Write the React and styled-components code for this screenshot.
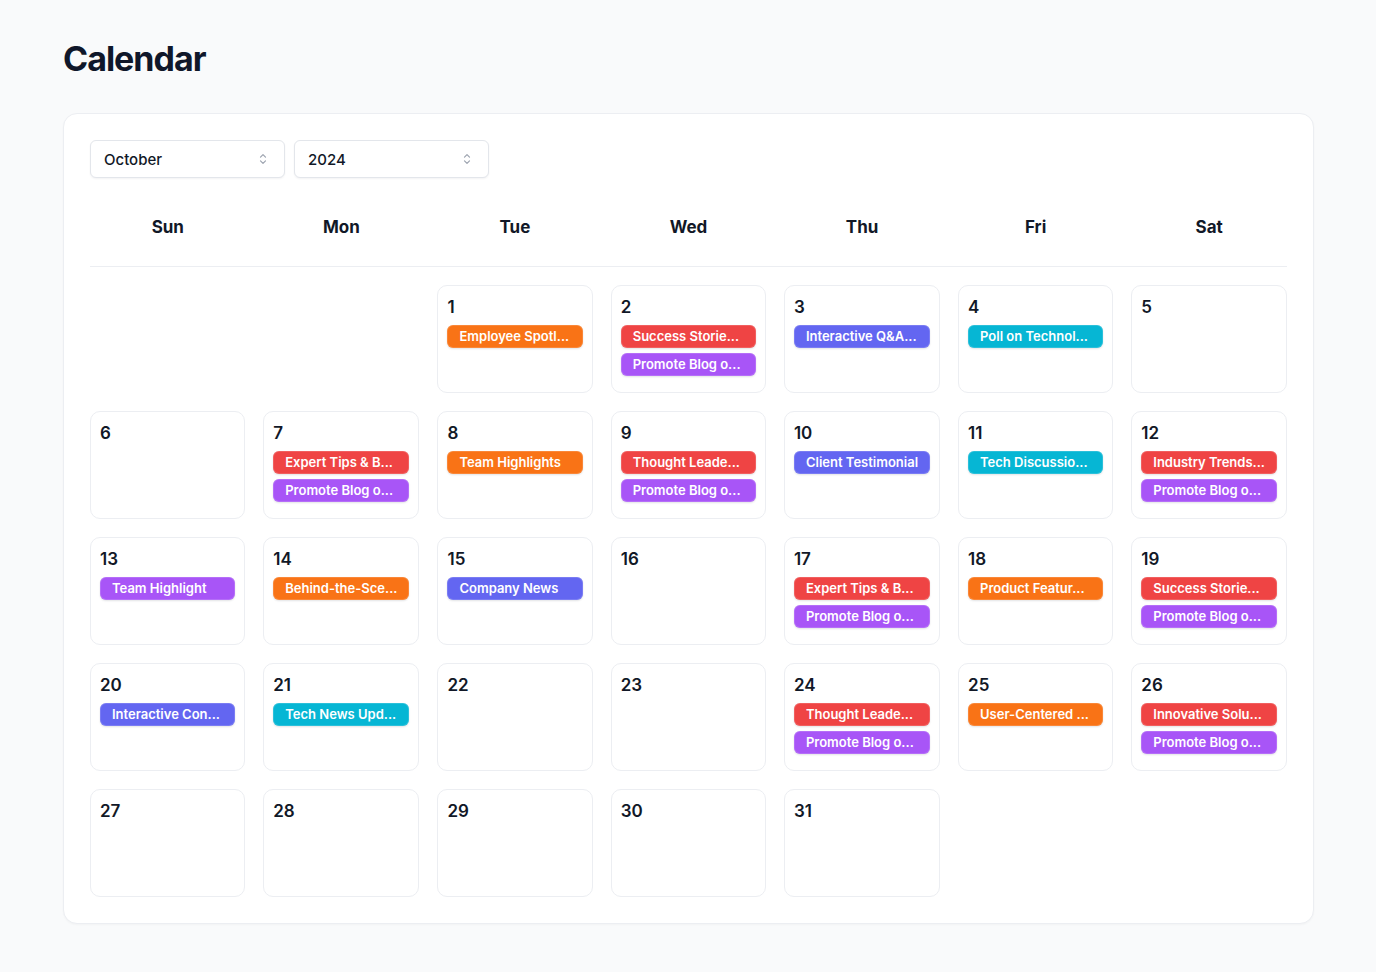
import React from "react";
import styled, { createGlobalStyle } from "styled-components";

const GlobalStyle = createGlobalStyle`
  * { box-sizing: border-box; }
  html, body { margin: 0; padding: 0; background: #f9fafb; }
  body { font-family: Inter, "Noto Sans", sans-serif; color: #111827; }
`;

const Page = styled.div`
  padding: 39px 62px 48px 63px;
  min-height: 972px;
`;

const Title = styled.h1`
  margin: 0 0 34px 0;
  font-size: 34px;
  line-height: 40px;
  font-weight: 700;
  letter-spacing: -1px;
  color: #0f172a;
`;

const Card = styled.div`
  background: #fff;
  border: 1px solid #eceef2;
  border-radius: 14px;
  padding: 26px 26px 26px 26px;
  box-shadow: 0 1px 2px rgba(16, 24, 40, 0.03);
`;

const Controls = styled.div`
  display: flex;
  gap: 9px;
`;

const SelectBox = styled.div`
  width: 195px;
  height: 38px;
  border: 1px solid #e3e6eb;
  border-radius: 6px;
  display: flex;
  align-items: center;
  justify-content: space-between;
  padding: 0 17px 0 13px;
  font-size: 15px;
  font-weight: 500;
  color: #111827;
  box-shadow: 0 1px 2px rgba(16, 24, 40, 0.05);
  background: #fff;
`;

const Header = styled.div`
  display: grid;
  grid-template-columns: repeat(7, 1fr);
  column-gap: 18px;
  margin-top: 24px;
  height: 65px;
  align-items: start;
  padding-top: 14px;
  border-bottom: 1px solid #eceef2;
`;

const DayName = styled.div`
  text-align: center;
  font-size: 17px;
  font-weight: 700;
  line-height: 22px;
  color: #111827;
`;

const Grid = styled.div`
  display: grid;
  grid-template-columns: repeat(7, 1fr);
  column-gap: 18px;
  row-gap: 18px;
  margin-top: 18px;
`;

const Cell = styled.div`
  height: 108px;
  border: 1px solid #eceef2;
  border-radius: 10px;
  padding: 10px 9px;
  display: flex;
  flex-direction: column;
  background: #fff;
`;

const Empty = styled.div``;

const DayNum = styled.div`
  font-size: 17px;
  font-weight: 600;
  line-height: 22px;
  color: #111827;
  margin-bottom: 7px;
`;

const Events = styled.div`
  display: flex;
  flex-direction: column;
  gap: 5px;
`;

const COLORS = {
  orange: "#f97316",
  red: "#ef4444",
  purple: "#a855f7",
  indigo: "#6366f1",
  cyan: "#06b6d4",
};

const Chip = styled.div`
  height: 23px;
  border-radius: 6px;
  background: ${(p) => COLORS[p.$color]};
  color: #fff;
  font-size: 13px;
  font-weight: 600;
  line-height: 23px;
  padding: 0 12px;
  white-space: nowrap;
  overflow: hidden;
  box-shadow: 0 1px 2px rgba(16, 24, 40, 0.12), 0 0 0 1px rgba(255,255,255,0.15) inset;
`;

const Chevron = () => (
  <svg width="8" height="12" viewBox="0 0 8 12" fill="none" stroke="#9ca3af" strokeWidth="1.2" strokeLinecap="round" strokeLinejoin="round">
    <path d="M1.5 4.2 L4 1.7 L6.5 4.2" />
    <path d="M1.5 7.8 L4 10.3 L6.5 7.8" />
  </svg>
);

const promo = ["purple", "Promote Blog o..."];
const events = {
  1: [["orange", "Employee Spotl..."]],
  2: [["red", "Success Storie..."], promo],
  3: [["indigo", "Interactive Q&A..."]],
  4: [["cyan", "Poll on Technol..."]],
  7: [["red", "Expert Tips & B..."], promo],
  8: [["orange", "Team Highlights"]],
  9: [["red", "Thought Leade..."], promo],
  10: [["indigo", "Client Testimonial"]],
  11: [["cyan", "Tech Discussio..."]],
  12: [["red", "Industry Trends..."], promo],
  13: [["purple", "Team Highlight"]],
  14: [["orange", "Behind-the-Sce..."]],
  15: [["indigo", "Company News"]],
  17: [["red", "Expert Tips & B..."], promo],
  18: [["orange", "Product Featur..."]],
  19: [["red", "Success Storie..."], promo],
  20: [["indigo", "Interactive Con..."]],
  21: [["cyan", "Tech News Upd..."]],
  24: [["red", "Thought Leade..."], promo],
  25: [["orange", "User-Centered ..."]],
  26: [["red", "Innovative Solu..."], promo],
};

const days = ["Sun", "Mon", "Tue", "Wed", "Thu", "Fri", "Sat"];

export default function App() {
  const cells = [];
  for (let i = 0; i < 2; i++) cells.push(null);
  for (let d = 1; d <= 31; d++) cells.push(d);
  return (
    <>
      <GlobalStyle />
      <Page>
        <Title>Calendar</Title>
        <Card>
          <Controls>
            <SelectBox>
              <span>October</span>
              <Chevron />
            </SelectBox>
            <SelectBox>
              <span>2024</span>
              <Chevron />
            </SelectBox>
          </Controls>
          <Header>
            {days.map((d) => (
              <DayName key={d}>{d}</DayName>
            ))}
          </Header>
          <Grid>
            {cells.map((d, i) =>
              d === null ? (
                <Empty key={"e" + i} />
              ) : (
                <Cell key={d}>
                  <DayNum>{d}</DayNum>
                  <Events>
                    {(events[d] || []).map(([c, t], j) => (
                      <Chip key={j} $color={c}>{t}</Chip>
                    ))}
                  </Events>
                </Cell>
              )
            )}
          </Grid>
        </Card>
      </Page>
    </>
  );
}
